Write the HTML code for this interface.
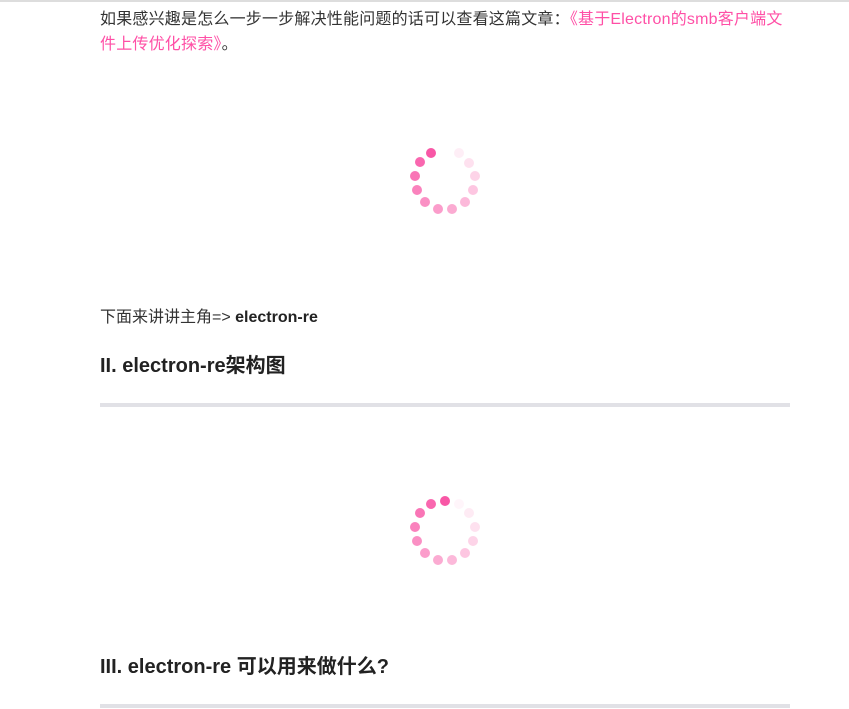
<!DOCTYPE html>
<html><head><meta charset="utf-8"><style>
body{margin:0;width:849px;height:709px;background:#fff;position:relative;overflow:hidden;font-family:"Liberation Sans","Noto Sans CJK SC",sans-serif;color:#333}
.top{position:absolute;left:0;top:0;width:849px;height:2px;background:#ddd}
.p{position:absolute;left:100px;width:700px;font-size:16px;line-height:25px;white-space:nowrap}
.a{color:#ff4fa6}
h2{position:absolute;left:100px;margin:0;font-size:20px;font-weight:bold;color:#222;line-height:28px}
.hr{position:absolute;left:100px;width:690px;height:4px;background:#e1e1e6}
</style></head><body>
<div class="top"></div>
<div class="p" style="top:7px;letter-spacing:0.2px">如果感兴趣是怎么一步一步解决性能问题的话可以查看这篇文章：<span class="a">《基于Electron的smb客户端文<br>件上传优化探索》</span>。</div>
<div class="p" style="top:305px">下面来讲讲主角=&gt; <b style="color:#222">electron-re</b></div>
<h2 style="top:352px">II. electron-re架构图</h2>
<div class="hr" style="top:403px"></div>
<h2 style="top:653px">III. electron-re 可以用来做什么?</h2>
<div class="hr" style="top:704px"></div>
<svg style="position:absolute;left:0;top:0" width="849" height="709">
<g fill="#f857a6">
<circle cx="431" cy="153" r="5" opacity="1"/>
<circle cx="420" cy="162" r="5" opacity=".9"/>
<circle cx="415" cy="176" r="5" opacity=".82"/>
<circle cx="417" cy="190" r="5" opacity=".74"/>
<circle cx="425" cy="202" r="5" opacity=".66"/>
<circle cx="438" cy="209" r="5" opacity=".58"/>
<circle cx="452" cy="209" r="5" opacity=".5"/>
<circle cx="465" cy="202" r="5" opacity=".42"/>
<circle cx="473" cy="190" r="5" opacity=".34"/>
<circle cx="475" cy="176" r="5" opacity=".26"/>
<circle cx="469" cy="163" r="5" opacity=".18"/>
<circle cx="459" cy="153" r="5" opacity=".1"/>

<circle cx="445" cy="501" r="5" opacity="1"/>
<circle cx="431" cy="504" r="5" opacity=".9"/>
<circle cx="420" cy="513" r="5" opacity=".82"/>
<circle cx="415" cy="527" r="5" opacity=".74"/>
<circle cx="417" cy="541" r="5" opacity=".66"/>
<circle cx="425" cy="553" r="5" opacity=".58"/>
<circle cx="438" cy="560" r="5" opacity=".5"/>
<circle cx="452" cy="560" r="5" opacity=".42"/>
<circle cx="465" cy="553" r="5" opacity=".34"/>
<circle cx="473" cy="541" r="5" opacity=".26"/>
<circle cx="475" cy="527" r="5" opacity=".18"/>
<circle cx="469" cy="513" r="5" opacity=".12"/>
<circle cx="459" cy="504" r="5" opacity=".06"/>
</g>
</svg>
</body></html>
